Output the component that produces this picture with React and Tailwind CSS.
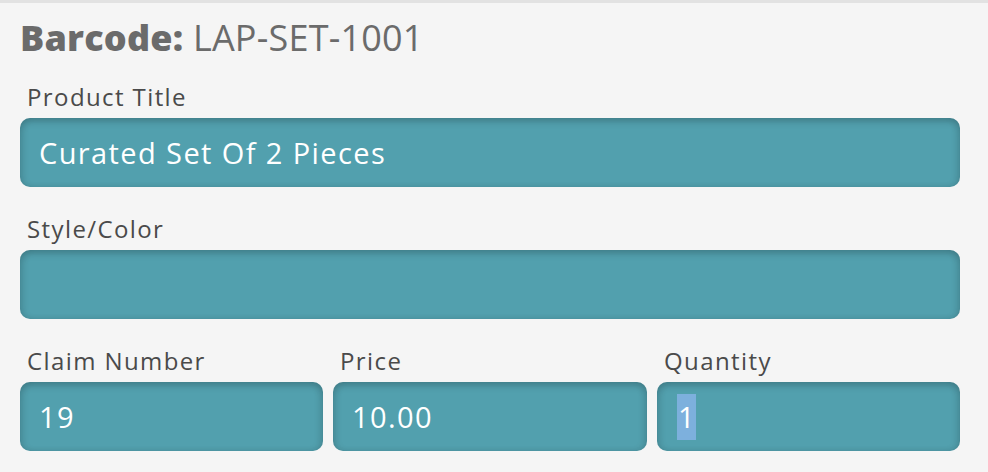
import React from "react";

const font = { fontFamily: '"Open Sans", "Liberation Sans", sans-serif' };

const Field = ({ label, children }) => (
  <div className="flex flex-col">
    <label className="pl-[7px] text-[24px] leading-[30px] tracking-[1.4px] text-[#4a4a4a] mb-[6px]">
      {label}
    </label>
    <div className="h-[69px] rounded-[10px] bg-[#52a0ae] shadow-[inset_0_4px_7px_rgba(0,0,0,0.16),inset_4px_0_6px_rgba(0,0,0,0.06),inset_-4px_0_6px_rgba(0,0,0,0.06)] flex items-center pl-[19px] text-white text-[29px] tracking-[1.4px]">
      {children}
    </div>
  </div>
);

export default function App() {
  return (
    <div
      className="w-[988px] h-[472px] bg-[#f5f5f5] border-t-[3px] border-[#e2e2e2] pl-5 pr-[28px] overflow-hidden"
      style={font}
    >
      <h1 className="mt-[15px] text-[36px] leading-[40px] tracking-[0.2px] text-[#6b6b6b]">
        <span className="font-extrabold">Barcode:</span> LAP-SET-1001
      </h1>

      <div className="mt-[24px] flex flex-col gap-[27px]">
        <Field label="Product Title">Curated Set Of 2 Pieces</Field>
        <Field label="Style/Color"></Field>
        <div className="grid grid-cols-[303px_314px_303px] gap-[10px]">
          <Field label="Claim Number">19</Field>
          <Field label="Price">10.00</Field>
          <Field label="Quantity">
            <span className="inline-block h-[46px] leading-[46px] bg-[#7db0dd] pl-[1px] pr-0 ml-[1px]">1</span>
          </Field>
        </div>
      </div>
    </div>
  );
}
